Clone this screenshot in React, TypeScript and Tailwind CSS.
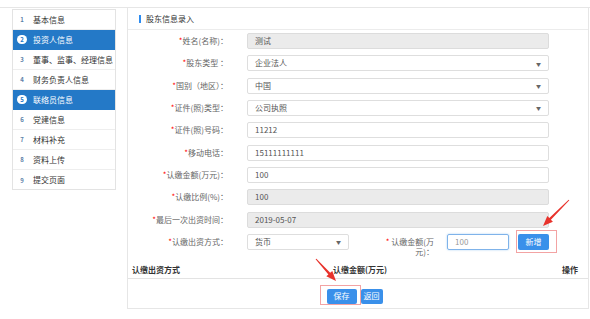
import React from 'react';

const steps = [
  { n: 1, label: '基本信息' },
  { n: 2, label: '投资人信息', active: true },
  { n: 3, label: '董事、监事、经理信息' },
  { n: 4, label: '财务负责人信息' },
  { n: 5, label: '联络员信息', active: true },
  { n: 6, label: '党建信息' },
  { n: 7, label: '材料补充' },
  { n: 8, label: '资料上传' },
  { n: 9, label: '提交页面' },
];

const fields = [
  { label: '姓名(名称)：', value: '测试', kind: 'disabled' },
  { label: '股东类型 ：', value: '企业法人', kind: 'select' },
  { label: '国别（地区）：', value: '中国', kind: 'select' },
  { label: '证件(照)类型：', value: '公司执照', kind: 'select' },
  { label: '证件(照)号码：', value: '11212', kind: 'input' },
  { label: '移动电话：', value: '15111111111', kind: 'input' },
  { label: '认缴金额(万元)：', value: '100', kind: 'input' },
  { label: '认缴比例(%)：', value: '100', kind: 'disabled' },
  { label: '最后一次出资时间：', value: '2019-05-07', kind: 'disabled' },
];

const Field = ({ value, kind }: { value: string; kind: string }) => (
  <div
    className={`ml-[19px] flex h-[16px] w-[302px] items-center justify-between rounded-[2px] border px-[7px] text-[8px] text-[#555] ${
      kind === 'disabled' ? 'border-[#dcdcdc] bg-[#ebebeb]' : 'border-[#dedede] bg-white'
    }`}
  >
    <span>{value}</span>
    {kind === 'select' && <span className="text-[5px] text-[#666]">▼</span>}
  </div>
);

const Label = ({ children }: { children: React.ReactNode }) => (
  <div className="w-[100px] text-right text-[8px] text-[#666]">
    <span className="text-[#f00]">*</span>
    {children}
  </div>
);

export default function App() {
  return (
    <div
      className="relative h-[319px] w-[590px] overflow-hidden bg-white"
      style={{ fontFamily: '"Noto Sans CJK SC", "Noto Sans", sans-serif' }}
    >
      <div className="mt-[7px] flex border-t border-[#e6e6e6]">
        {/* sidebar */}
        <div className="ml-[12px] mt-[1px] h-[181px] w-[104px] border border-[#e3e3e3]">
          {steps.map((s) => (
            <div
              key={s.n}
              className={`flex h-[20px] items-center border-b pl-[4px] text-[8px] last:border-b-0 ${
                s.active ? 'border-[#2479c7] bg-[#2479c7] text-white' : 'border-[#eeeeee] text-[#333]'
              }`}
            >
              <span
                className={`flex h-[9px] w-[10px] items-center justify-center rounded-full text-[6px] font-bold ${
                  s.active ? 'bg-white text-[#2479c7]' : 'text-[#5b7fa8]'
                }`}
              >
                {s.n}
              </span>
              <span className="ml-[6px]">{s.label}</span>
            </div>
          ))}
        </div>

        {/* main panel */}
        <div className="ml-[11px] h-[301px] w-[462px] border-x border-b border-[#e6e6e6]">
          <div className="flex h-[22px] items-center border-b border-[#ececec] pl-[11px] text-[8px] text-[#333]">
            <span className="mr-[5px] h-[8px] w-[2px] bg-[#2d8cf0]" />
            股东信息录入
          </div>

          {fields.map((f) => (
            <div key={f.label} className="flex h-[22.3px] items-center">
              <Label>{f.label}</Label>
              <Field value={f.value} kind={f.kind} />
            </div>
          ))}

          <div className="flex h-[22.3px] items-center">
            <Label>认缴出资方式：</Label>
            <div className="ml-[19px] flex h-[16px] w-[102px] items-center justify-between rounded-[2px] border border-[#dedede] px-[7px] text-[8px] text-[#555]">
              <span>货币</span>
              <span className="text-[5px] text-[#666]">▼</span>
            </div>
            <div className="mt-[10px] w-[85px] text-right text-[8px] leading-[10px] text-[#666]">
              <span className="text-[#f00]">*</span> 认缴金额(万
              <br />
              元)：
            </div>
            <div className="ml-[13px] flex h-[16px] w-[62px] items-center rounded-[2px] border border-[#7fb3ea] px-[7px] text-[8px] text-[#999] shadow-[0_0_2px_rgba(102,175,233,0.6)]">
              100
            </div>
            <div className="relative ml-[9px]">
              <div className="flex h-[16px] w-[31px] items-center justify-center rounded-[2px] bg-[#3a90ea] text-[8px] text-white">
                新增
              </div>
              <span className="absolute -left-[2px] -top-[4px] h-[23px] w-[41px] border border-[#f3a3a3]" />
            </div>
          </div>

          <div className="mt-[9px] flex h-[17px] items-center border-b border-[#e3e3e3] pl-[4px] pr-[10px] text-[8px] font-bold text-[#333]">
            <span className="w-[201px]">认缴出资方式</span>
            <span className="flex-1">认缴金额(万元)</span>
            <span>操作</span>
          </div>

          <div className="mt-[10px] flex justify-center gap-[4px] pr-[7px]">
            <div className="relative">
              <div className="flex h-[15px] w-[30px] items-center justify-center rounded-[2px] bg-[#3a90ea] text-[8px] text-white">
                保存
              </div>
              <span className="absolute -left-[7px] -top-[4px] h-[20px] w-[41px] border border-[#f3a3a3]" />
            </div>
            <div className="flex h-[15px] w-[22px] items-center justify-center rounded-[2px] bg-[#3a90ea] text-[8px] text-white">
              返回
            </div>
          </div>
        </div>
      </div>

      {/* annotation arrows */}
      <svg className="pointer-events-none absolute left-0 top-0" width="590" height="319">
        <polygon
          fill="#e8332c"
          points="569.35,200.35 550.9,219.7 552.9,221.7 543,226 547.3,216.1 549.3,218.1 568.65,199.65"
        />
        <polygon
          fill="#e8332c"
          points="315.6,259.3 328.4,274.4 326.3,276.3 336,281 332.3,270.9 330.2,272.8 316.4,258.7"
        />
      </svg>
    </div>
  );
}
